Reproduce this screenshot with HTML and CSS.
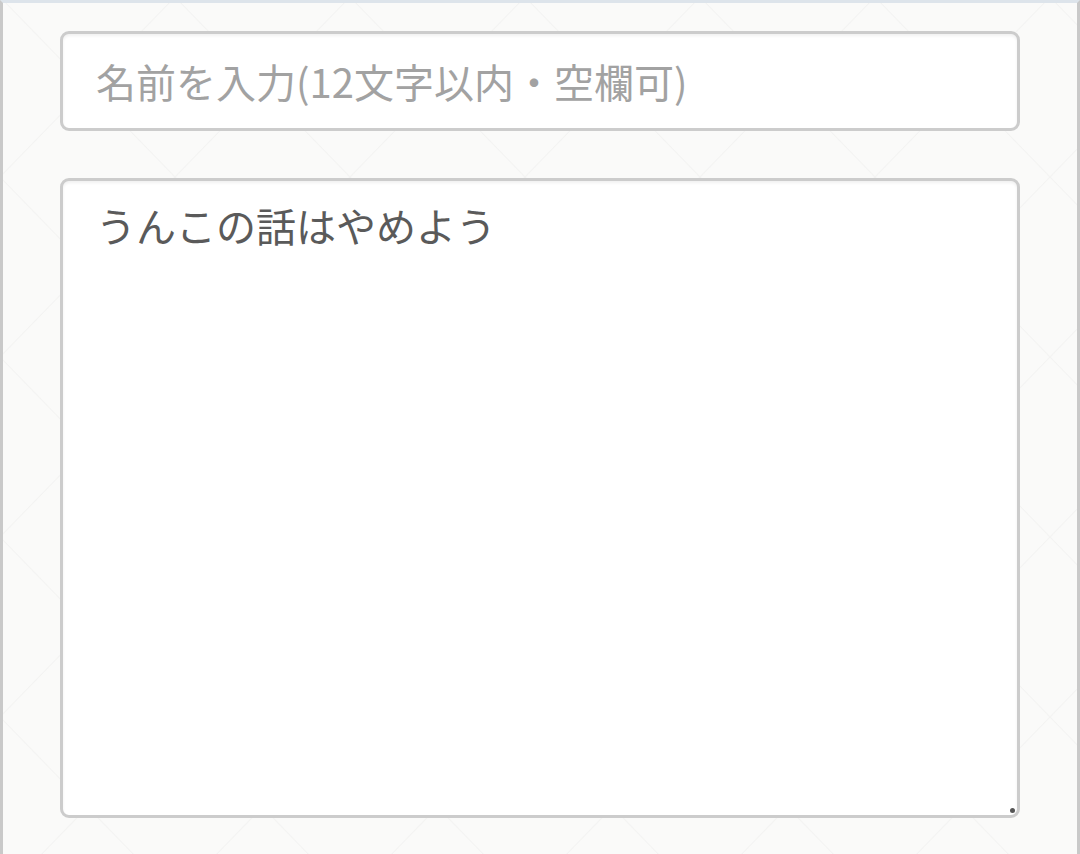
FILE: index.html
```html
<!DOCTYPE html>
<html lang="ja">
<head>
    <meta charset="UTF-8">
    <meta name="viewport" content="width=device-width, initial-scale=1">
    <title>投稿フォーム</title>
    <link rel="stylesheet" href="styles.css">
</head>
<body>
    <div class="page">
        <form class="post-form">
            <input type="text" class="name-input" maxlength="12" placeholder="名前を入力(12文字以内・空欄可)">
            <div class="message-box">
                <textarea class="message-input">うんこの話はやめよう</textarea>
                <span class="grip"></span>
            </div>
        </form>
    </div>
</body>
</html>
```

FILE: styles.css
```css
body {
    margin: 0;
    font-family: "Noto Sans CJK JP", "Noto Sans", sans-serif;
}
.page {
    box-sizing: border-box;
    min-height: 100vh;
    border-top: 3px solid #dde4eb;
    border-left: 3px solid #c9c9c9;
    border-right: 3px solid #c9c9c9;
    padding: 28px 57px 36px;
    background-color: #fafaf9;
    background-image:
        linear-gradient(to top right, transparent calc(50% - 1px), #f3f3f2 50%, transparent calc(50% + 1px)),
        linear-gradient(to bottom right, transparent calc(50% - 1px), #f3f3f2 50%, transparent calc(50% + 1px));
    background-size: 175px 180px;
    background-position: -3px -6px;
}
.post-form {
    display: flex;
    flex-direction: column;
    gap: 47px;
}
.name-input,
.message-input {
    box-sizing: border-box;
    width: 100%;
    margin: 0;
    border: 3px solid #cccccc;
    border-radius: 9px;
    background: #fff;
    box-shadow: inset 0 2px 3px rgba(0, 0, 0, 0.06);
    font-family: "Noto Sans CJK JP", "Noto Sans", sans-serif;
    font-size: 40px;
    color: #5a5a5a;
    outline: none;
}
.name-input {
    height: 100px;
    padding: 0 33px;
}
.name-input::placeholder {
    color: #a2a2a2;
}
.message-box {
    position: relative;
}
.message-input {
    display: block;
    height: 640px;
    padding: 14px 33px;
    line-height: 1.5;
    resize: none;
}
.grip {
    position: absolute;
    right: 5px;
    bottom: 5px;
    width: 5px;
    height: 5px;
    border-radius: 50%;
    background: #555;
}
```
